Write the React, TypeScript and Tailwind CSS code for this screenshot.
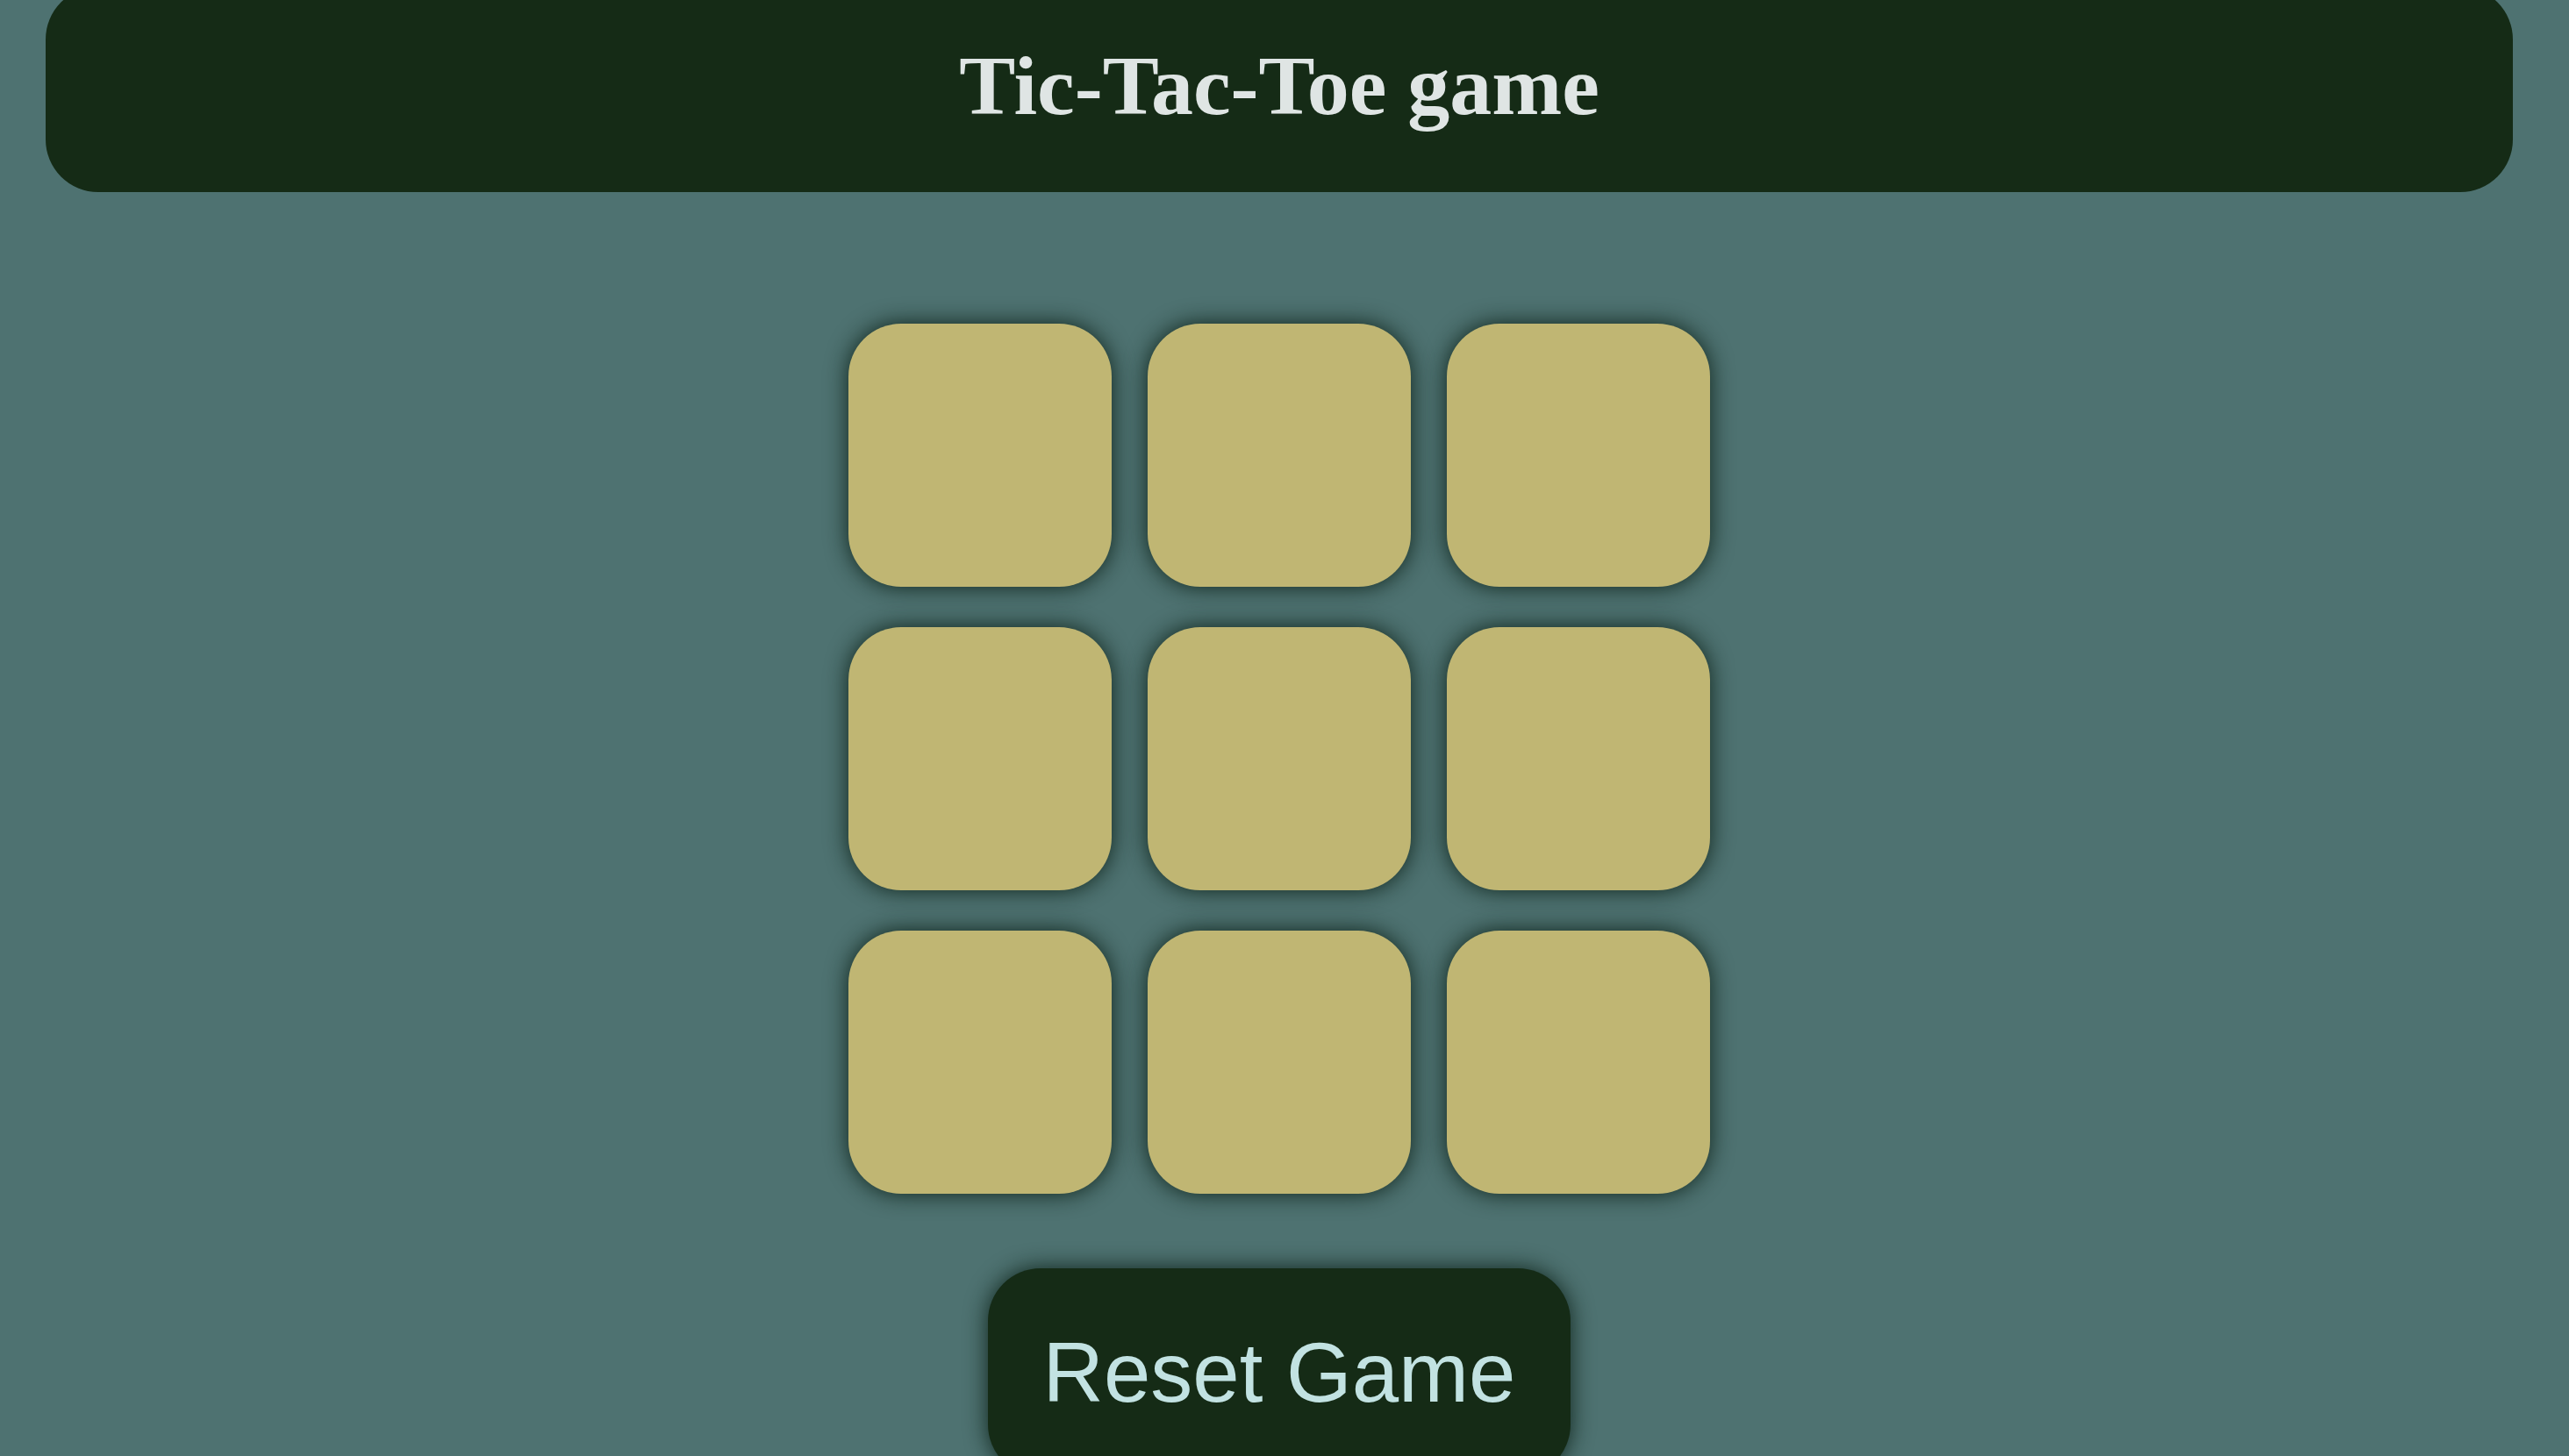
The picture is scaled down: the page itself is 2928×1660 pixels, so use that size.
import { useState } from "react";

type Mark = "X" | "O" | null;

export default function App() {
  const [board, setBoard] = useState<Mark[]>(Array(9).fill(null));
  const [turn, setTurn] = useState<"X" | "O">("X");

  const play = (i: number) => {
    if (board[i]) return;
    const next = [...board];
    next[i] = turn;
    setBoard(next);
    setTurn(turn === "X" ? "O" : "X");
  };

  const reset = () => {
    setBoard(Array(9).fill(null));
    setTurn("X");
  };

  return (
    <div className="h-screen overflow-hidden bg-[#4e7271]">
      <div className="w-[2916px] flex flex-col items-center">
        {/* Header */}
        <header className="-mt-[15px] w-[2812px] rounded-[60px] bg-[#152b16] pt-[60px] pb-[68px] text-center">
          <h1 className="text-[96px] leading-[106px] font-bold text-[#dfe5e4] font-['Liberation_Serif',serif]">
            Tic-Tac-Toe game
          </h1>
        </header>

        {/* Board */}
        <div className="mt-[150px] grid grid-cols-3 gap-x-[41px] gap-y-[46px]">
          {board.map((cell, i) => (
            <button
              key={i}
              onClick={() => play(i)}
              className="w-[300px] h-[300px] rounded-[60px] bg-[#c0b673] shadow-[0_0_26px_rgba(12,32,22,0.95)] text-[160px] font-bold text-[#152b16] font-['Liberation_Sans',sans-serif]"
            >
              {cell}
            </button>
          ))}
        </div>

        {/* Reset */}
        <button
          onClick={reset}
          className="mt-[85px] rounded-[60px] bg-[#152b16] px-[63px] py-[64px] text-[96px] leading-[110px] text-[#c2e2e2] shadow-[0_0_26px_rgba(12,32,22,0.95)] font-['Liberation_Sans',sans-serif]"
        >
          Reset Game
        </button>
      </div>
    </div>
  );
}
